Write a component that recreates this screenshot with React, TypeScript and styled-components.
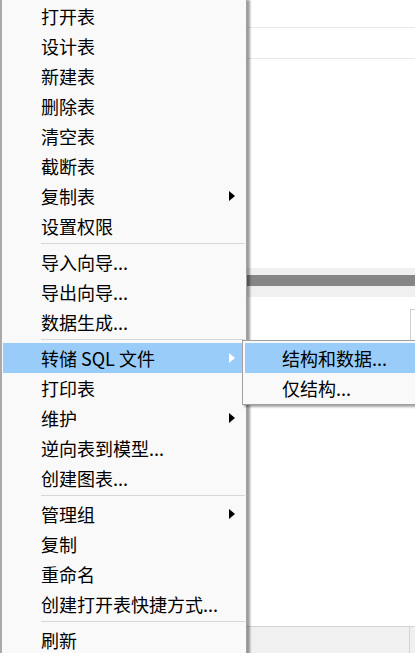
import styled, { createGlobalStyle } from "styled-components";

const GlobalStyle = createGlobalStyle`
  html, body {
    margin: 0;
    padding: 0;
  }
  body {
    width: 415px;
    height: 653px;
    overflow: hidden;
    background: #ffffff;
    font-family: "Noto Sans CJK SC", "Noto Sans", sans-serif;
  }
  #root {
    position: relative;
    width: 415px;
    height: 653px;
    overflow: hidden;
  }
`;

type Entry =
  | { kind: "item"; label: string; sub?: boolean; active?: boolean }
  | { kind: "sep" };

const MENU: Entry[] = [
  { kind: "item", label: "打开表" },
  { kind: "item", label: "设计表" },
  { kind: "item", label: "新建表" },
  { kind: "item", label: "删除表" },
  { kind: "item", label: "清空表" },
  { kind: "item", label: "截断表" },
  { kind: "item", label: "复制表", sub: true },
  { kind: "item", label: "设置权限" },
  { kind: "sep" },
  { kind: "item", label: "导入向导..." },
  { kind: "item", label: "导出向导..." },
  { kind: "item", label: "数据生成..." },
  { kind: "sep" },
  { kind: "item", label: "转储 SQL 文件", sub: true, active: true },
  { kind: "item", label: "打印表" },
  { kind: "item", label: "维护", sub: true },
  { kind: "item", label: "逆向表到模型..." },
  { kind: "item", label: "创建图表..." },
  { kind: "sep" },
  { kind: "item", label: "管理组", sub: true },
  { kind: "item", label: "复制" },
  { kind: "item", label: "重命名" },
  { kind: "item", label: "创建打开表快捷方式..." },
  { kind: "sep" },
  { kind: "item", label: "刷新" },
];

const SUBMENU = [
  { label: "结构和数据...", active: true },
  { label: "仅结构...", active: false },
];

const App = () => {
  return (
    <>
      <GlobalStyle />
      <Window>
        <TitleArea />
        <ToolRow />
        <ObjectArea />
        <Splitter />
        <LowerPanel>
          <FieldBox />
        </LowerPanel>
        <StatusBar>
          <StatusCell />
        </StatusBar>
      </Window>

      <ContextMenu>
        {MENU.map((entry, i) =>
          entry.kind === "sep" ? (
            <Separator key={i}>
              <SepLine />
            </Separator>
          ) : (
            <MenuItem key={i} $active={entry.active}>
              <span>{entry.label}</span>
              {entry.sub && <Arrow $active={entry.active} />}
            </MenuItem>
          )
        )}
      </ContextMenu>

      <SubMenu>
        {SUBMENU.map((s) => (
          <SubItem key={s.label} $active={s.active}>
            {s.label}
          </SubItem>
        ))}
      </SubMenu>
    </>
  );
};

export default App;

const Window = styled.div`
  display: flex;
  flex-direction: column;
  width: 415px;
  height: 653px;
  background: #ffffff;
`;

const TitleArea = styled.div`
  height: 27px;
  border-bottom: 1px solid #e8e8e8;
`;

const ToolRow = styled.div`
  height: 30px;
  border-bottom: 1px solid #e8e8e8;
`;

const ObjectArea = styled.div`
  height: 209px;
`;

const Splitter = styled.div`
  height: 11px;
  background: #868686;
  border-top: 7px solid #f0f0f0;
  border-bottom: 11px solid #f0f0f0;
`;

const LowerPanel = styled.div`
  height: 317px;
  padding: 12px 0 0 410px;
`;

const FieldBox = styled.div`
  height: 31px;
  border: 1px solid #cfcfcf;
  border-right: none;
  border-bottom: none;
`;

const StatusBar = styled.div`
  flex: 1;
  display: flex;
  background: #f0f0f0;
  border-top: 1px solid #d4d4d4;
`;

const StatusCell = styled.div`
  width: 409px;
  border-right: 1px solid #d4d4d4;
`;

const ContextMenu = styled.div`
  position: absolute;
  left: 0;
  top: 0;
  width: 244px;
  padding-top: 1px;
  background: #f9f9f9;
  border-left: 2px solid #a9a9a9;
  border-right: 1px solid #a0a0a0;
  box-shadow: 3px 0 2px rgba(0, 0, 0, 0.38);
  z-index: 1;
`;

const MenuItem = styled.div<{ $active?: boolean }>`
  display: flex;
  align-items: center;
  height: 30px;
  margin: 0 1px;
  padding-left: 38px;
  font-size: 18px;
  line-height: 1;
  color: #000000;
  white-space: nowrap;
  background: ${(p) => (p.$active ? "#99ccf8" : "transparent")};
`;

const Arrow = styled.i<{ $active?: boolean }>`
  margin-left: auto;
  margin-right: 10px;
  width: 0;
  height: 0;
  border-top: 5.5px solid transparent;
  border-bottom: 5.5px solid transparent;
  border-left: 6px solid ${(p) => (p.$active ? "#ffffff" : "#000000")};
`;

const Separator = styled.div`
  display: flex;
  flex-direction: column;
  height: 6px;
  padding-top: 2px;
  box-sizing: border-box;
  margin: 0 1px 0 39px;
`;

const SepLine = styled.div`
  height: 1px;
  background: #d7d7d7;
`;

const SubMenu = styled.div`
  position: absolute;
  left: 242px;
  top: 340px;
  width: 172px;
  padding: 2px 0 1px;
  background: #f9f9f9;
  border: 1px solid #a0a0a0;
  border-right: none;
  box-shadow: 2px 2px 2px rgba(0, 0, 0, 0.35);
  z-index: 2;
`;

const SubItem = styled.div<{ $active?: boolean }>`
  display: flex;
  align-items: center;
  height: 30px;
  margin-left: 2px;
  padding-left: 37px;
  font-size: 18px;
  line-height: 1;
  color: #000000;
  white-space: nowrap;
  background: ${(p) => (p.$active ? "#99ccf8" : "transparent")};
`;
